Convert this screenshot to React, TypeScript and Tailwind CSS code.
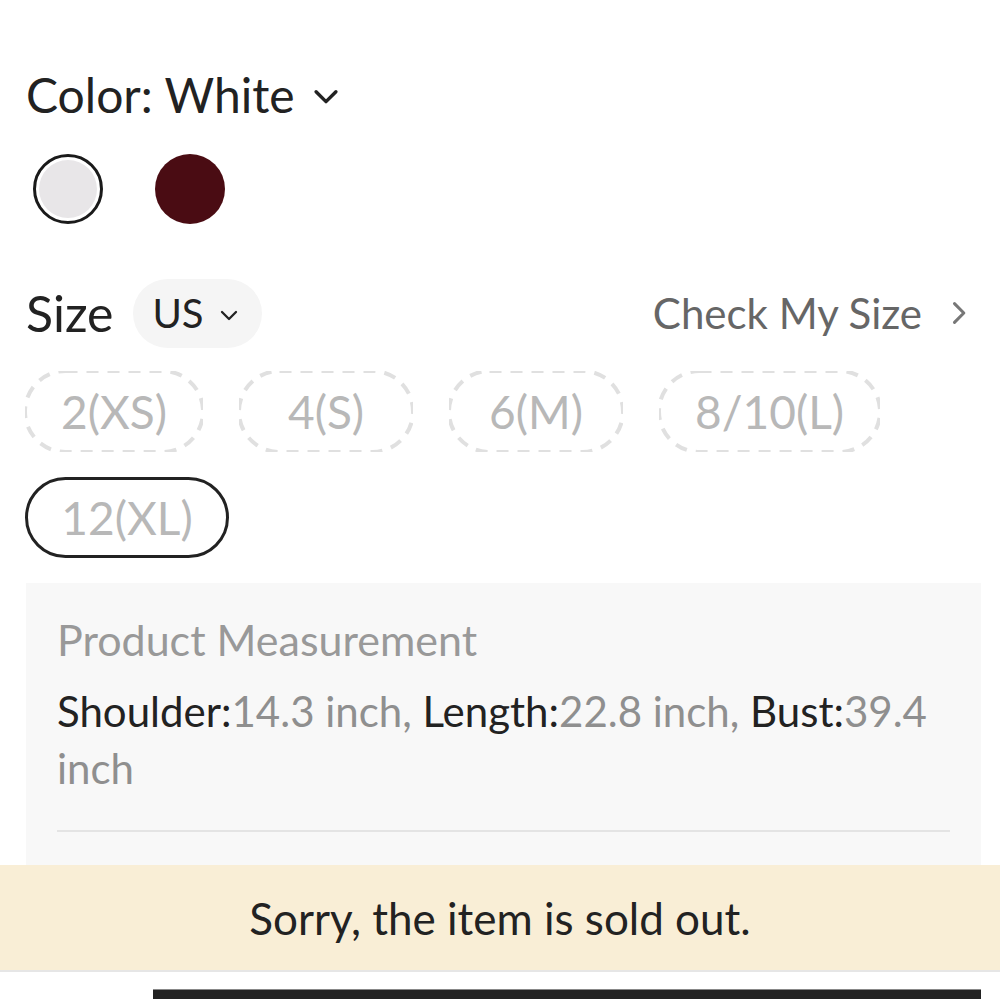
import React from "react";

const Chevron = ({ className, dir = "down", sw = 3 }: { className?: string; dir?: "down" | "right"; sw?: number }) => (
  <svg viewBox="0 0 24 24" className={className} fill="none" stroke="currentColor" strokeWidth={sw} strokeLinecap="round" strokeLinejoin="round">
    {dir === "down" ? <path d="M5 9l7 7 7-7" /> : <path d="M9 4l8 8-8 8" />}
  </svg>
);

const sizes = ["2(XS)", "4(S)", "6(M)", "8/10(L)"];

const DashedChip = ({ label }: { label: string }) => (
  <div className="relative h-[81px] min-w-[174px] px-[36px] rounded-full flex items-center justify-center text-[46px] leading-none text-[#b8b8b8]">
    <svg className="absolute inset-0 w-full h-full overflow-hidden pointer-events-none" fill="none">
      <rect x="0" y="0" width="100%" height="100%" rx="40.5" ry="40.5" stroke="#e0e0e0" strokeWidth="4" strokeDasharray="12 9" />
    </svg>
    <span className="relative">{label}</span>
  </div>
);

export default function App() {
  return (
    <div className="w-[1000px] h-[999px] overflow-hidden bg-white font-['Lato',_sans-serif] text-[#222]">
      <div className="pl-[26px] pr-[19px]">
        <div className="flex items-center h-[60px] mt-[65px] text-[48px] leading-none">
          <span>Color: White</span>
          <Chevron className="w-[34px] h-[34px] ml-[14px] mt-[2px]" sw={2.4} />
        </div>
        <div className="flex items-center gap-[52px] mt-[29px] ml-[7px]">
          <div className="w-[70px] h-[70px] rounded-full border-[3px] border-[#1a1a1a] p-[3px]">
            <div className="w-full h-full rounded-full bg-[#e8e6e8]" />
          </div>
          <div className="w-[70px] h-[70px] rounded-full bg-[#4a0c13]" />
        </div>
        <div className="flex items-center justify-between h-[70px] mt-[54px]">
          <div className="flex items-center">
            <span className="text-[50px] leading-none">Size</span>
            <div className="ml-[20px] h-[69px] w-[129px] rounded-full bg-[#f5f5f5] flex items-center pl-[19px]">
              <span className="text-[40px] leading-none">US</span>
              <Chevron className="w-[24px] h-[24px] ml-[13px] mt-[3px]" sw={2.3} />
            </div>
          </div>
          <div className="flex items-center text-[#666]">
            <span className="text-[42px] leading-none">Check My Size</span>
            <Chevron dir="right" className="w-[28px] h-[28px] ml-[22px] mr-[9px] text-[#777]" sw={2.6} />
          </div>
        </div>
        <div className="flex flex-wrap gap-x-[36px] gap-y-[25px] mt-[23px] w-[950px] -ml-[1px]">
          {sizes.map((s) => (
            <DashedChip key={s} label={s} />
          ))}
          <div className="h-[81px] w-[204px] rounded-full border-[3px] border-[#222] flex items-center justify-center text-[46px] leading-none text-[#b8b8b8]">
            12(XL)
          </div>
        </div>
        <div className="mt-[25px] bg-[#f8f8f8] h-[282px] px-[31px] pt-[35px]">
          <div className="text-[43px] leading-none text-[#999]">Product Measurement</div>
          <div className="mt-[22px] text-[42px] leading-[57px] text-[#8f8f8f]">
            <div className="flex whitespace-pre">
              <span className="text-[#222]">Shoulder:</span>
              <span>14.3 inch, </span>
              <span className="text-[#222]">Length:</span>
              <span>22.8 inch, </span>
              <span className="text-[#222]">Bust:</span>
              <span>39.4</span>
            </div>
            <div>inch</div>
          </div>
          <div className="mt-[33px] h-[2px] bg-[#e4e4e4]" />
        </div>
      </div>
      <div className="h-[107px] bg-[#f9eed6] border-b-[2px] border-[#e6e6e6] flex items-center justify-center text-[44px] text-[#222]">
        Sorry, the item is sold out.
      </div>
      <div className="mt-[17px] ml-[153px] mr-[19px] h-[20px] bg-[#222] border-t-[1px] border-[#888]" />
    </div>
  );
}
